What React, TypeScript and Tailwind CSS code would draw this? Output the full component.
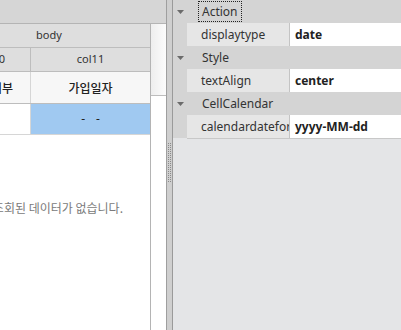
import React from "react";

const SANS = "font-['Segoe_UI','Noto_Sans','Open_Sans',sans-serif]";
const KR = "font-['Noto_Sans_CJK_KR','Noto_Sans',sans-serif]";

type Prop = { name: string; value: string };
type Group = { title: string; props: Prop[]; focused?: boolean };

const GROUPS: Group[] = [
  { title: "Action", props: [{ name: "displaytype", value: "date" }], focused: true },
  { title: "Style", props: [{ name: "textAlign", value: "center" }] },
  { title: "CellCalendar", props: [{ name: "calendardateformat", value: "yyyy-MM-dd" }] },
];

function Arrow() {
  return (
    <svg width="7" height="4" viewBox="0 0 7 4" className="shrink-0">
      <path d="M0 0 H7 L3.5 4 Z" fill="#6b6b6b" />
    </svg>
  );
}

function Grip() {
  return (
    <svg width="3" height="40" viewBox="0 0 3 40">
      <defs>
        <pattern id="dots" width="2" height="2" patternUnits="userSpaceOnUse">
          <rect x="0" y="0" width="1" height="1" fill="#8a8a8a" />
        </pattern>
      </defs>
      <rect width="3" height="40" fill="url(#dots)" />
    </svg>
  );
}

function Grid() {
  return (
    <div className="flex h-full">
      <div className="w-[151px] h-full border-r border-[#b4b4b4] flex flex-col bg-white">
        <div className={`h-[24px] bg-[#dedede] border-b border-[#bdbdbd] flex items-center pl-[36px] text-[11px] text-[#333] ${SANS}`}>
          body
        </div>
        <div className={`h-[24px] bg-[#dedede] border-b border-[#bdbdbd] flex text-[11px] text-[#333] ${SANS}`}>
          <div className="w-[31px] border-r border-[#bdbdbd] flex items-center justify-end pr-[25px] overflow-hidden">
            col10
          </div>
          <div className="flex-1 flex items-center justify-center">col11</div>
        </div>
        <div className={`h-[32px] bg-[#f7f7f7] border-b border-[#bdbdbd] flex text-[12px] font-medium text-[#222] ${KR}`}>
          <div className="w-[31px] border-r border-[#d6d6d6] flex items-center justify-end pr-[17px] whitespace-nowrap overflow-hidden">
            가입여부
          </div>
          <div className="flex-1 flex items-center justify-center">가입일자</div>
        </div>
        <div className="h-[31px] border-b border-[#d6d6d6] flex">
          <div className="w-[31px] border-r border-[#d6d6d6]" />
          <div className={`flex-1 bg-[#a0c9f1] flex items-center justify-center gap-[11px] text-[12px] text-[#222] ${SANS}`}>
            <span>-</span>
            <span>-</span>
          </div>
        </div>
        <div className="h-[64px]" />
        <div className={`w-[123px] flex justify-end overflow-hidden whitespace-nowrap text-[12px] text-[#7a7a7a] ${KR}`}>
          조회된 데이터가 없습니다.
        </div>
      </div>
      <div className="w-[15px] h-full flex flex-col bg-white">
        <div className="h-[48px] bg-gradient-to-r from-[#eeeeee] to-[#fcfcfc]" />
        <div className="h-[24px] bg-gradient-to-r from-[#eeeeee] to-[#fcfcfc] border-b border-[#bdbdbd]" />
      </div>
    </div>
  );
}

function PropertyPanel() {
  return (
    <div className={`flex-1 h-full bg-[#e4e5e7] flex flex-col ${SANS}`}>
      {GROUPS.map((g) => (
        <div key={g.title} className="flex flex-col">
          <div className="h-[23px] bg-[#d4d4d4] flex items-center">
            <div className="w-[25px] pl-[4px] flex items-center">
              <Arrow />
            </div>
            <span
              className={`text-[12px] text-[#333] leading-[17px] px-[3px] py-[1px] ${
                g.focused ? "border border-dotted border-[#222]" : "border border-transparent"
              }`}
            >
              {g.title}
            </span>
          </div>
          {g.props.map((p) => (
            <div key={p.name} className="h-[23px] bg-[#d4d4d4] flex">
              <div className="w-[14px]" />
              <div className="w-[103px] bg-[#e6e6e6] border-r border-[#c4c4c4] flex items-center pl-[14px] overflow-hidden whitespace-nowrap text-[12px] text-[#333]">
                {p.name}
              </div>
              <div className="flex-1 bg-white flex items-center pl-[5px] text-[12px] font-bold text-[#222]">
                {p.value}
              </div>
            </div>
          ))}
        </div>
      ))}
      <div className="ml-[14px] border-t border-[#c8c8c8]" />
    </div>
  );
}

export default function App() {
  return (
    <div className="w-[401px] h-[330px] flex overflow-hidden bg-[#e4e5e7]">
      <div className="w-[167px] h-full border-r border-[#9f9f9f] flex flex-col bg-white">
        <div className="h-[24px] shrink-0 bg-[#d6d6d6] border-b border-[#b4b4b4]" />
        <div className="flex-1">
          <Grid />
        </div>
      </div>
      <div className="w-[6px] h-full bg-[#cfcfcf] border-r border-[#9a9a9a] flex justify-center pt-[143px]">
        <div className="h-[40px]">
          <Grip />
        </div>
      </div>
      <PropertyPanel />
    </div>
  );
}
